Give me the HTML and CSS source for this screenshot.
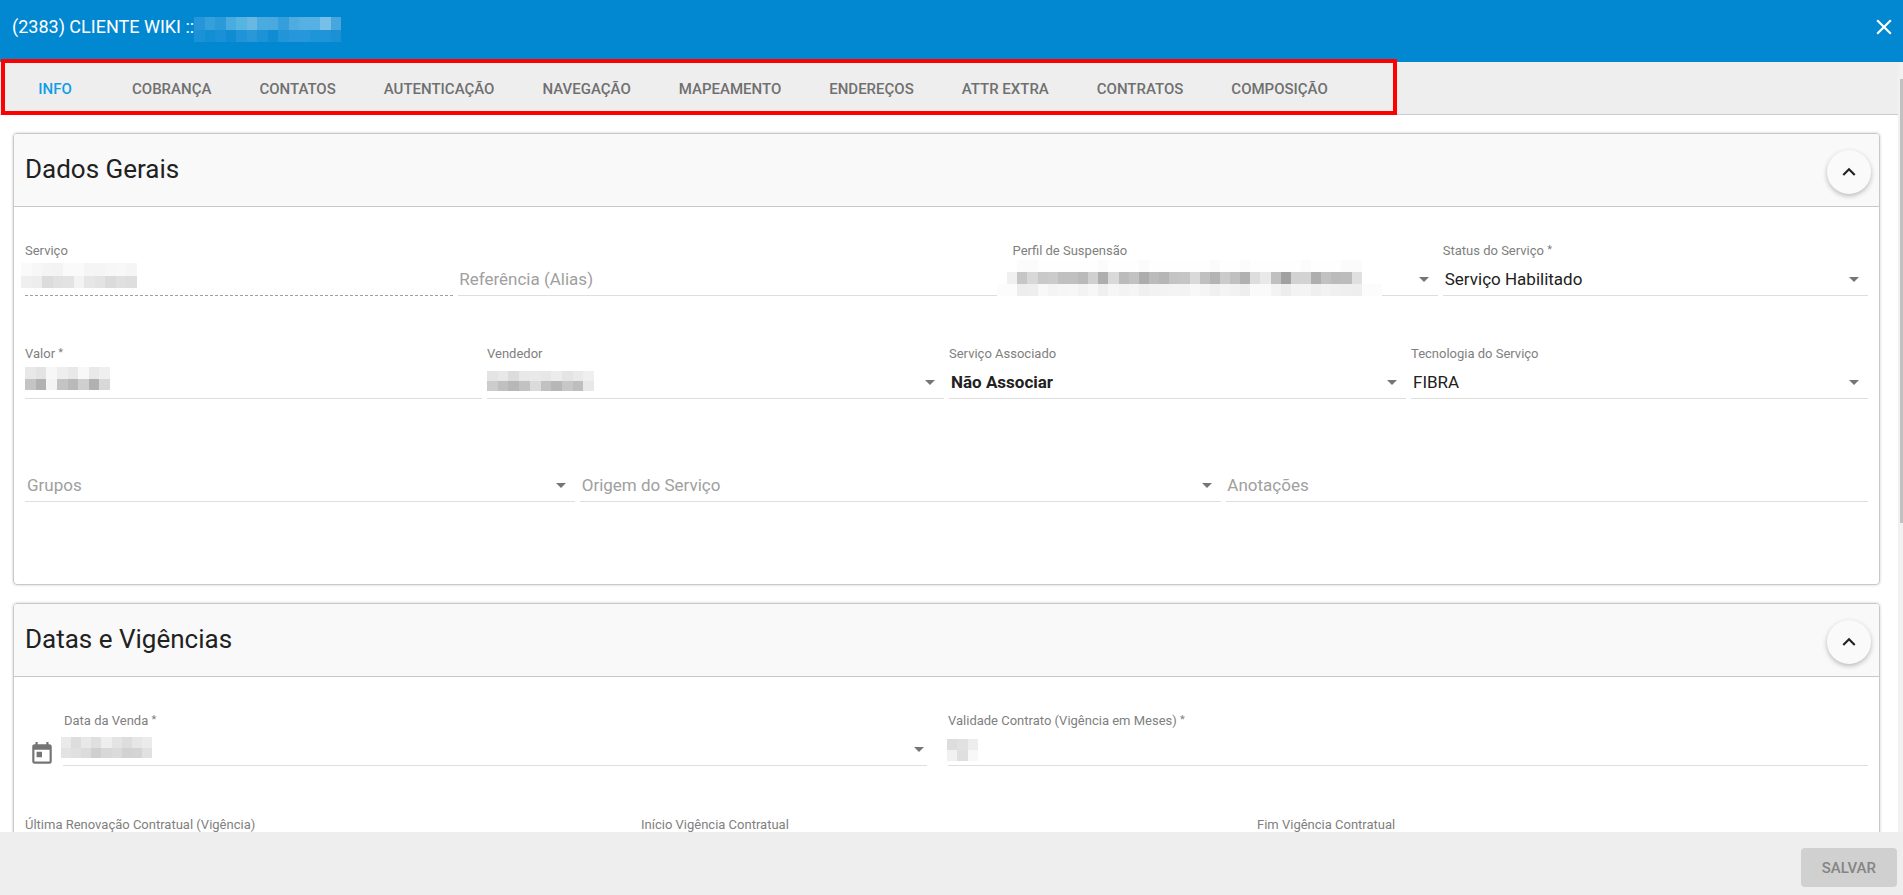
FILE: index.html
```html
<!DOCTYPE html>
<html lang="pt-BR">
<head>
<meta charset="utf-8">
<title>(2383) CLIENTE WIKI</title>
<link rel="stylesheet" href="styles.css">
</head>
<body>
<header class="topbar">
  <h1 class="topbar-title">(2383) CLIENTE WIKI ::</h1>
  <svg class="mosaic mosaic-title" aria-hidden="true" data-cells="2795d9 34a0dc 2a9ad9 4aabe0 55b4e0 68b8e3 4aabe0 4aa9df 359fdc 4fabe0 57b0e3 57b0e3 75bfe9 48a6df/1b91d7 128ed5 1990d7 108cd4 1f94d8 2898d9 1d92d7 0f8cd4 2295d9 2597da 2597da 1f95d9 1f95d9 1c90d5"></svg>
  <button class="close" type="button" aria-label="Fechar">
    <svg viewBox="0 0 24 24"><path d="M19 6.41L17.59 5 12 10.59 6.41 5 5 6.41 10.59 12 5 17.59 6.41 19 12 13.41 17.59 19 19 17.59 13.41 12z"/></svg>
  </button>
</header>

<main class="main">
  <div class="content">
    <nav class="tabs">
      <div class="tab-list" role="tablist">
        <button class="tab tab-active" type="button" role="tab" aria-selected="true">INFO</button>
        <button class="tab" type="button" role="tab">COBRANÇA</button>
        <button class="tab" type="button" role="tab">CONTATOS</button>
        <button class="tab" type="button" role="tab">AUTENTICAÇÃO</button>
        <button class="tab" type="button" role="tab">NAVEGAÇÃO</button>
        <button class="tab" type="button" role="tab">MAPEAMENTO</button>
        <button class="tab" type="button" role="tab">ENDEREÇOS</button>
        <button class="tab" type="button" role="tab">ATTR EXTRA</button>
        <button class="tab" type="button" role="tab">CONTRATOS</button>
        <button class="tab" type="button" role="tab">COMPOSIÇÃO</button>
        <span class="highlight"></span>
      </div>
    </nav>

    <div class="panels">
      <section class="card">
        <div class="card-head">
          <h2 class="card-title">Dados Gerais</h2>
          <button class="fab" type="button" aria-label="Recolher Dados Gerais">
            <svg viewBox="0 0 24 24"><path d="M12 8l-6 6 1.41 1.41L12 10.83l4.59 4.58L18 14z"/></svg>
          </button>
        </div>
        <div class="card-body">
          <div class="row row-service">
            <div class="field">
              <label class="label" for="servico">Serviço</label>
              <input class="control control-disabled" id="servico" type="text" disabled>
              <svg class="mosaic mosaic-servico" aria-hidden="true" data-cells="fa f7 f4 f3 fa fa f5 f5 f7 f8 f5/ef ed dc e1 e3 f3 e6 e3 db e0 de"></svg>
            </div>
            <div class="field">
              <input class="control" type="text" placeholder="Referência (Alias)" aria-label="Referência (Alias)">
            </div>
            <div class="field field-select">
              <label class="label" for="perfil">Perfil de Suspensão</label>
              <select class="control" id="perfil"><option></option></select>
              <svg class="mosaic mosaic-perfil" aria-hidden="true" data-cells="ff ff fb fb fe fe fe fe fe fe fb fe fe fe fb fe fe fe fe fe fe fb fe fe fb fe fe fe fe fe fb fe fe fe fb fb ff ff/ff f0 c6 d8 c9 cb c0 c0 ba d0 ae d9 bb c2 ad bb b6 c4 c5 d9 c0 b4 cb c0 b0 dd e9 c0 a1 d2 d3 ae c1 bb bc e0 ff ff/fc fc ed ee f8 f4 f6 f7 f3 f7 ef f6 f3 f5 f0 f2 f3 f4 f3 f8 f5 f0 f4 f2 ee fa fa f3 ed f3 f4 ef f2 f0 ef ee fc fc"></svg>
            </div>
            <div class="field field-select">
              <label class="label" for="status">Status do Serviço <span class="req">*</span></label>
              <select class="control" id="status"><option>Serviço Habilitado</option></select>
            </div>
          </div>
          <div class="row row-four">
            <div class="field">
              <label class="label" for="valor">Valor <span class="req">*</span></label>
              <input class="control" id="valor" type="text">
              <svg class="mosaic mosaic-valor" aria-hidden="true" data-cells="e8 e3 f7 ee e8 f8 e9 ef/c4 b1 f4 c4 b9 cf b1 d8"></svg>
            </div>
            <div class="field field-select">
              <label class="label" for="vendedor">Vendedor</label>
              <select class="control" id="vendedor"><option></option></select>
              <svg class="mosaic mosaic-vendedor" aria-hidden="true" data-cells="e4 e8 dc e8 e9 e7 ec e4 e9 ef/cc c0 b7 c2 db c1 b7 c7 be e8"></svg>
            </div>
            <div class="field field-select">
              <label class="label" for="associado">Serviço Associado</label>
              <select class="control control-strong" id="associado"><option>Não Associar</option></select>
            </div>
            <div class="field field-select">
              <label class="label" for="tecnologia">Tecnologia do Serviço</label>
              <select class="control" id="tecnologia"><option>FIBRA</option></select>
            </div>
          </div>
          <div class="row row-notes">
            <div class="field field-select">
              <select class="control control-empty" aria-label="Grupos"><option>Grupos</option></select>
            </div>
            <div class="field field-select">
              <select class="control control-empty" aria-label="Origem do Serviço"><option>Origem do Serviço</option></select>
            </div>
            <div class="field">
              <input class="control" type="text" placeholder="Anotações" aria-label="Anotações">
            </div>
          </div>
        </div>
      </section>

      <section class="card">
        <div class="card-head">
          <h2 class="card-title">Datas e Vigências</h2>
          <button class="fab" type="button" aria-label="Recolher Datas e Vigências">
            <svg viewBox="0 0 24 24"><path d="M12 8l-6 6 1.41 1.41L12 10.83l4.59 4.58L18 14z"/></svg>
          </button>
        </div>
        <div class="card-body">
          <div class="row row-dates">
            <div class="date">
              <button class="calendar" type="button" aria-label="Abrir calendário">
                <svg viewBox="0 0 24 24"><path d="M19 3h-1V1h-2v2H8V1H6v2H5c-1.11 0-1.99.9-1.99 2L3 19c0 1.1.89 2 2 2h14c1.1 0 2-.9 2-2V5c0-1.1-.9-2-2-2zm0 16H5V8h14v11zM7 10h5v5H7z"/></svg>
              </button>
              <div class="field field-select field-date">
                <label class="label" for="venda">Data da Venda <span class="req">*</span></label>
                <input class="control" id="venda" type="text">
                <svg class="mosaic mosaic-venda" aria-hidden="true" data-cells="ea dd e8 df ee e4 dd e6 eb/e3 e0 dc cf d8 db d2 d4 e1"></svg>
              </div>
            </div>
            <div class="field">
              <label class="label" for="validade">Validade Contrato (Vigência em Meses) <span class="req">*</span></label>
              <input class="control" id="validade" type="text">
              <svg class="mosaic mosaic-validade" aria-hidden="true" data-cells="dd e1 ed/f1 df f8"></svg>
            </div>
          </div>
          <div class="row row-three">
            <div class="field">
              <label class="label" for="renovacao">Última Renovação Contratual (Vigência)</label>
              <input class="control" id="renovacao" type="text">
            </div>
            <div class="field">
              <label class="label" for="inicio">Início Vigência Contratual</label>
              <input class="control" id="inicio" type="text">
            </div>
            <div class="field">
              <label class="label" for="fim">Fim Vigência Contratual</label>
              <input class="control" id="fim" type="text">
            </div>
          </div>
        </div>
      </section>
    </div>
  </div>
  <div class="track"><div class="thumb"></div></div>
</main>

<footer class="footer">
  <button class="save" type="button" disabled>SALVAR</button>
</footer>
<script src="mosaic.js"></script>
</body>
</html>
```

FILE: styles.css
```css
* {
  box-sizing: border-box;
}

body {
  margin: 0;
  height: 100vh;
  display: flex;
  flex-direction: column;
  overflow: hidden;
  background: #fff;
  color: #212121;
  font-family: Roboto, "Liberation Sans", sans-serif;
  font-size: 17px;
}

button,
input,
select {
  font: inherit;
  color: inherit;
  margin: 0;
  padding: 0;
  border: 0;
  background: none;
}

svg {
  display: block;
  fill: currentColor;
}

.topbar {
  display: flex;
  align-items: flex-start;
  height: 62px;
  flex: none;
  padding: 14px 6px 0 12px;
  background: #0288d1;
  color: #fff;
}

.topbar-title {
  margin: 0;
  font-size: 18px;
  font-weight: 400;
  line-height: 26px;
}

.close {
  margin-left: auto;
}

.close svg,
.calendar svg {
  width: 26px;
  height: 26px;
}

.main {
  flex: 1;
  min-height: 0;
  display: flex;
}

.content {
  flex: 1;
  min-width: 0;
  display: flex;
  flex-direction: column;
}

.tabs {
  flex: none;
  display: flex;
  padding-left: 2px;
  background: #eee;
  border-bottom: 1px solid #ccc;
}

.tab-list {
  position: relative;
  display: flex;
}

.tab {
  height: 52px;
  padding: 2px 24px 0;
  color: #707070;
  font-size: 15px;
  font-weight: 500;
}

.tab-active {
  min-width: 106px;
  color: #109ce8;
}

.highlight {
  position: absolute;
  inset: -3px -45px -1px -1px;
  border: 4px solid #f00;
  pointer-events: none;
}

.panels {
  flex: 1;
  min-height: 0;
  overflow: hidden;
  padding: 18px 18px 0 13px;
  display: flex;
  flex-direction: column;
  gap: 18px;
}

.card {
  flex: none;
  border: 1px solid #c8c8c8;
  border-radius: 4px;
  box-shadow: 0 0 3px rgba(0, 0, 0, 0.2);
}

.card-head {
  display: flex;
  align-items: flex-start;
  justify-content: space-between;
  padding: 16px 8px 12px 11px;
  background: #f9f9f9;
  border-bottom: 1px solid #c8c8c8;
  border-radius: 3px 3px 0 0;
}

.card-title {
  margin: 0;
  font-size: 26px;
  font-weight: 400;
  line-height: 38px;
}

.fab {
  display: flex;
  align-items: center;
  justify-content: center;
  width: 44px;
  height: 44px;
  border-radius: 50%;
  background: #fafafa;
  box-shadow: 0 2px 5px rgba(0, 0, 0, 0.26);
}

.fab svg {
  width: 26px;
  height: 26px;
}

.card-body {
  display: grid;
  row-gap: 48px;
  padding: 34px 11px 82px;
}

.row {
  display: grid;
  column-gap: 5px;
}

.row-service {
  grid-template-columns: 428fr 549fr 425fr 425fr;
}

.row-four {
  grid-template-columns: repeat(4, 1fr);
}

.row-notes {
  grid-template-columns: 550fr 642fr 642fr;
}

.row-dates {
  grid-template-columns: 902fr 920fr;
  column-gap: 21px;
}

.row-three {
  grid-template-columns: repeat(3, 1fr);
}

.field {
  position: relative;
  min-width: 0;
  display: flex;
  flex-direction: column;
  justify-content: flex-end;
  height: 55px;
}

.label {
  color: #808080;
  font-size: 13px;
  line-height: 20px;
  white-space: nowrap;
}

.req {
  font-size: 11px;
  line-height: 11px;
  vertical-align: 2px;
}

.control {
  appearance: none;
  width: 100%;
  height: 35px;
  padding: 2px 1px 0;
  border-bottom: 1px solid #dedede;
  border-radius: 0;
  outline: 0;
}

.control::placeholder {
  color: #a0a0a0;
  opacity: 1;
}

select.control {
  padding-left: 2px;
}

.control-strong {
  font-weight: 700;
}

.control-empty {
  color: #a0a0a0;
}

.control-disabled {
  border-bottom: 1px dashed #a0a0a0;
}

.field-select::after {
  content: "";
  position: absolute;
  right: 9px;
  top: 36px;
  border: 5px solid transparent;
  border-top-color: #757575;
  border-bottom: 0;
  pointer-events: none;
}

.field-date::after {
  right: 3px;
}

.date {
  display: flex;
}

.date .field {
  flex: 1;
}

.date .label {
  padding-left: 1px;
}

.calendar {
  width: 38px;
  padding: 30px 0 0 4px;
  color: #757575;
}

.mosaic {
  position: absolute;
  pointer-events: none;
}

.mosaic-title {
  position: static;
  width: 147px;
  height: 25px;
  margin-top: 3px;
}

.mosaic-servico {
  left: -4px;
  top: 22px;
  width: 116px;
  height: 25px;
}

.mosaic-perfil {
  left: -16px;
  top: 19px;
  width: 385px;
  height: 36px;
}

.mosaic-valor {
  left: 0;
  top: 23px;
  width: 85px;
  height: 23px;
}

.mosaic-vendedor {
  left: 0;
  top: 27px;
  width: 107px;
  height: 20px;
}

.mosaic-venda {
  left: -2px;
  top: 26px;
  width: 91px;
  height: 21px;
}

.mosaic-validade {
  left: -1px;
  top: 28px;
  width: 31px;
  height: 22px;
}

.track {
  flex: none;
  width: 5px;
  padding: 17px 0 0 2px;
  background: #f1f1f1;
}

.thumb {
  height: 59%;
  background: #c1c1c1;
}

.footer {
  flex: none;
  display: flex;
  justify-content: flex-end;
  padding: 16px 6px 8px;
  background: #eee;
}

.save {
  height: 39px;
  padding: 0 21px;
  border-radius: 4px;
  background: #d0d0d0;
  color: #858585;
  font-size: 15px;
  font-weight: 500;
}
```

FILE: mosaic.js
```js
// Fills each redaction mosaic from its rows of grey levels or full colours.
document.querySelectorAll("svg[data-cells]").forEach(function (svg) {
  var rows = svg.dataset.cells.split("/").map(function (r) { return r.split(" "); });
  svg.setAttribute("viewBox", "0 0 " + rows[0].length + " " + rows.length);
  svg.setAttribute("preserveAspectRatio", "none");
  svg.setAttribute("shape-rendering", "crispEdges");
  rows.forEach(function (row, y) {
    row.forEach(function (c, x) {
      var cell = document.createElementNS("http://www.w3.org/2000/svg", "rect");
      cell.setAttribute("x", x);
      cell.setAttribute("y", y);
      cell.setAttribute("width", 1);
      cell.setAttribute("height", 1);
      cell.setAttribute("fill", "#" + (c.length === 2 ? c + c + c : c));
      svg.appendChild(cell);
    });
  });
});
```
